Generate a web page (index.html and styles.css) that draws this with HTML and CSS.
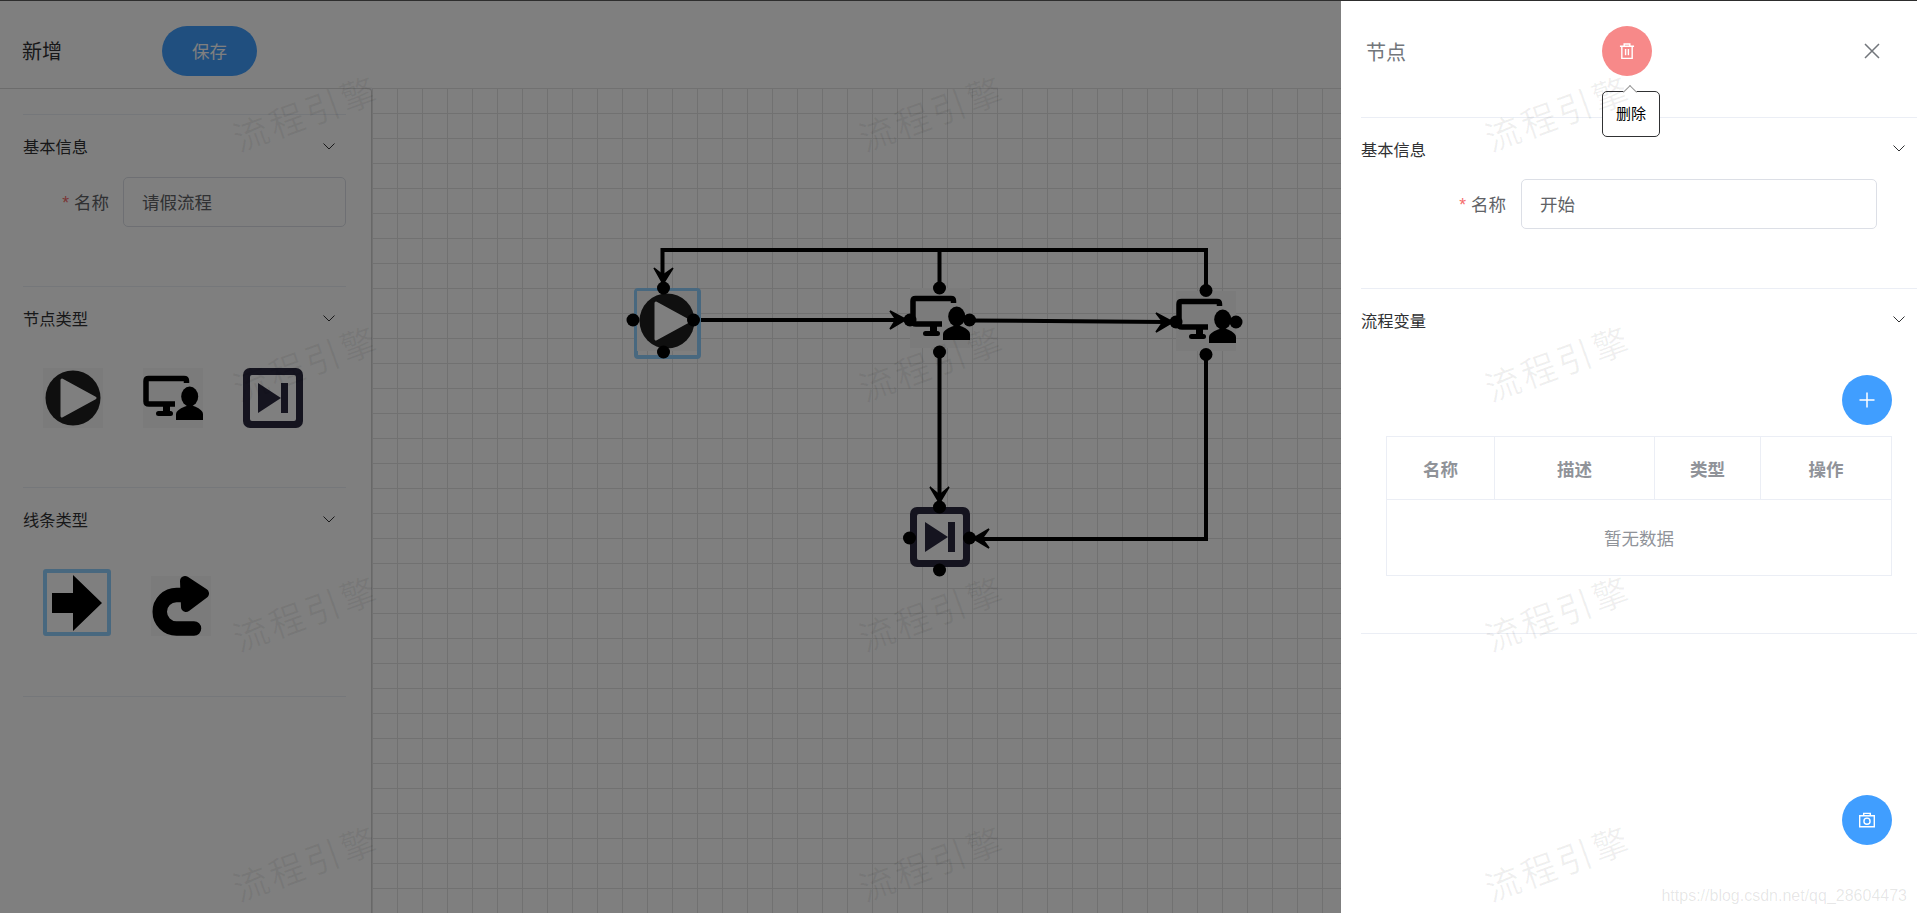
FILE: index.html
```html
<!DOCTYPE html>
<html lang="zh-CN">
<head>
    <meta charset="UTF-8">
    <title>流程引擎</title>
    <link rel="stylesheet" href="styles.css">
</head>
<body>
    <!-- icons shared by the palette and the canvas -->
    <svg class="icon-defs" aria-hidden="true">
        <symbol id="icon-start" viewBox="0 0 60 60">
            <rect width="60" height="60" fill="#f7f7f7"/>
            <circle cx="30" cy="30" r="27.5" fill="#1e1e1e"/>
            <polygon points="19,12 52,30 19,48" fill="#fff" stroke="#fff" stroke-width="3" stroke-linejoin="round"/>
        </symbol>
        <symbol id="icon-task" viewBox="0 0 60 60">
            <rect width="60" height="60" fill="#f7f7f7"/>
            <path d="M43.5 15V13Q43.5 10.5 41 10.5H5.500Q3 10.500 3 13V33.500Q3 36 6 36H32" fill="none" stroke="#000" stroke-width="5.500"/>
            <rect x="20" y="37" width="7" height="7"/>
            <rect x="13" y="43" width="17" height="5" rx="2.5"/>
            <ellipse cx="46.700" cy="28.500" rx="8.500" ry="10"/>
            <path d="M33 52V46Q33 42 42 38.500Q47 36.500 52 38.500Q60 42 60 46V52Z"/>
        </symbol>
        <symbol id="icon-end" viewBox="0 0 60 60">
            <rect width="60" height="60" rx="7" fill="#2a283e"/>
            <rect x="7" y="7" width="46" height="46" rx="2" fill="#fff"/>
            <polygon points="15,15 38,30 15,45" fill="#2a283e"/>
            <rect x="38" y="15" width="7" height="30" fill="#2a283e"/>
        </symbol>
    </svg>

    <div class="page">
        <div class="page-header">
            <span class="page-title">新增</span>
            <button class="btn-save">保存</button>
        </div>

        <div class="page-body">
            <div class="panel">
                <div class="collapse">
                    <div class="collapse-item">
                        <div class="collapse-title">
                            <span>基本信息</span>
                            <svg class="chevron" viewBox="0 0 12 7"><path d="M.5.5 6 6 11.500.5"/></svg>
                        </div>
                        <div class="form-row panel-form">
                            <label class="form-label"><i>*</i> 名称</label>
                            <input class="form-input" value="请假流程">
                        </div>
                    </div>
                    <div class="collapse-item">
                        <div class="collapse-title">
                            <span>节点类型</span>
                            <svg class="chevron" viewBox="0 0 12 7"><path d="M.5.5 6 6 11.500.5"/></svg>
                        </div>
                        <div class="palette">
                            <svg class="palette-icon"><use href="#icon-start"/></svg>
                            <svg class="palette-icon"><use href="#icon-task"/></svg>
                            <svg class="palette-icon"><use href="#icon-end"/></svg>
                        </div>
                    </div>
                    <div class="collapse-item">
                        <div class="collapse-title">
                            <span>线条类型</span>
                            <svg class="chevron" viewBox="0 0 12 7"><path d="M.5.5 6 6 11.500.5"/></svg>
                        </div>
                        <div class="palette palette-lines">
                            <div class="line-selected">
                                <svg class="line-icon" viewBox="0 0 50 57">
                                    <polygon points="0,18 21,18 21,0 50,28 21,56 21,38 0,38"/>
                                </svg>
                            </div>
                            <svg class="palette-icon" viewBox="0 0 60 60">
                                <rect width="60" height="60" fill="#f7f7f7"/>
                                <path d="M43 52.500H25.500A16.750 16.750 0 0 1 25.500 19H40" fill="none" stroke="#000" stroke-width="14.500" stroke-linecap="round"/>
                                <polygon points="34,5 53,17.500 35,31" stroke="#000" stroke-width="10" stroke-linejoin="round"/>
                            </svg>
                        </div>
                    </div>
                </div>
            </div>

            <div class="canvas">
                <svg class="diagram">
                    <g transform="translate(-372 -88)">
                        <path class="edge" d="M694 320H900"/>
                        <path class="edge" d="M969 320.500 1166 322"/>
                        <path class="edge" d="M1206 290V250H662.500V276"/>
                        <path class="edge" d="M939.500 288V250"/>
                        <path class="edge" d="M939.500 352V496"/>
                        <path class="edge" d="M1206 354V539H981"/>

                        <rect class="selected" x="636" y="290" width="63" height="67" rx="2"/>
                        <use href="#icon-start" x="637" y="291" width="60" height="60"/>
                        <use href="#icon-task" x="910" y="288" width="60" height="60"/>
                        <use href="#icon-task" x="1176" y="291" width="60" height="60"/>
                        <use href="#icon-end" x="910" y="507" width="60" height="60"/>

                        <g class="arrows">
                            <polygon points="906,319.500 890,311 896,319.500 890,329"/>
                            <polygon points="1173,322 1156,313 1163,322 1156,332"/>
                            <polygon points="663,284 654,268 663,275 673,268"/>
                            <polygon points="939.500,503 930,487 939.500,495 949,487"/>
                            <polygon points="973,538.500 989,529 982,538.500 989,548"/>
                        </g>

                        <circle cx="633" cy="320" r="6.500"/>
                        <circle cx="693.500" cy="320" r="6.500"/>
                        <circle cx="663.500" cy="288" r="6.500"/>
                        <circle cx="663.500" cy="352" r="6.500"/>
                        <circle cx="910" cy="320" r="6.500"/>
                        <circle cx="969.500" cy="320" r="6.500"/>
                        <circle cx="939.500" cy="288" r="6.500"/>
                        <circle cx="939.500" cy="352" r="6.500"/>
                        <circle cx="1176" cy="322" r="6.500"/>
                        <circle cx="1236" cy="322" r="6.500"/>
                        <circle cx="1206" cy="290.500" r="6.500"/>
                        <circle cx="1206" cy="354.500" r="6.500"/>
                        <circle cx="909.500" cy="538" r="6.500"/>
                        <circle cx="969.500" cy="538" r="6.500"/>
                        <circle cx="939.500" cy="507" r="6.500"/>
                        <circle cx="939.500" cy="570" r="6.500"/>
                    </g>
                </svg>
            </div>
        </div>
    </div>

    <div class="overlay"></div>

    <div class="drawer">
        <div class="drawer-header">
            <span class="drawer-title">节点</span>
            <div class="delete-wrap">
                <button class="btn-round btn-danger">
                    <svg class="btn-icon" viewBox="0 0 16 17">
                        <path d="M.5 3.500H15.500M5 3.500V1H11V3.500M2.500 3.500V16.500H13.500V3.500M6.500 6.500V13M9.500 6.500V13"/>
                    </svg>
                </button>
                <div class="tooltip">删除</div>
            </div>
            <svg class="close-icon" viewBox="0 0 16 16"><path d="M1 1 15 15M15 1 1 15"/></svg>
        </div>

        <div class="collapse drawer-collapse">
            <div class="collapse-item">
                <div class="collapse-title">
                    <span>基本信息</span>
                    <svg class="chevron" viewBox="0 0 12 7"><path d="M.5.5 6 6 11.500.5"/></svg>
                </div>
                <div class="form-row drawer-form">
                    <label class="form-label"><i>*</i> 名称</label>
                    <input class="form-input" value="开始">
                </div>
            </div>
            <div class="collapse-item">
                <div class="collapse-title">
                    <span>流程变量</span>
                    <svg class="chevron" viewBox="0 0 12 7"><path d="M.5.5 6 6 11.500.5"/></svg>
                </div>
                <div class="variables">
                    <button class="btn-round btn-primary">
                        <svg class="btn-icon" viewBox="0 0 16 16"><path d="M8 .5V15.500M.5 8H15.500"/></svg>
                    </button>
                    <table class="var-table">
                        <colgroup>
                            <col class="col-name">
                            <col class="col-desc">
                            <col class="col-type">
                            <col class="col-action">
                        </colgroup>
                        <thead>
                            <tr>
                                <th>名称</th>
                                <th>描述</th>
                                <th>类型</th>
                                <th>操作</th>
                            </tr>
                        </thead>
                        <tbody>
                            <tr>
                                <td colspan="4">暂无数据</td>
                            </tr>
                        </tbody>
                    </table>
                </div>
            </div>
        </div>

        <button class="btn-round btn-primary btn-snapshot">
            <svg class="btn-icon" viewBox="0 0 17 16">
                <path d="M.75 3.500H16.250V15.250H.75ZM5 3.500V1H12V3.500"/>
                <circle cx="8.500" cy="9.250" r="3.250"/>
            </svg>
        </button>
    </div>

    <div class="watermark">
        <div class="watermark-grid">
            <span>流程引擎</span><span>流程引擎</span><span>流程引擎</span>
            <span>流程引擎</span><span>流程引擎</span><span>流程引擎</span>
            <span>流程引擎</span><span>流程引擎</span><span>流程引擎</span>
            <span>流程引擎</span><span>流程引擎</span><span>流程引擎</span>
        </div>
    </div>
    <div class="blog-mark">https://blog.csdn.net/qq_28604473</div>
</body>
</html>
```

FILE: styles.css
```css
/* Page */
* {
    box-sizing: border-box;
}

html, body {
    height: 100%;
}

body {
    margin: 0;
    position: relative;
    overflow: hidden;
    background-color: #fff;
    color: #303133;
    font-family: "Liberation Sans", "Noto Sans CJK SC", sans-serif;
}

button {
    font-family: inherit;
    border: 0;
    padding: 0;
    cursor: pointer;
}

.icon-defs {
    position: absolute;
    width: 0;
    height: 0;
}

.page {
    display: flex;
    flex-direction: column;
    height: 100%;
    border-top: 1px solid #5a5a5a;
}

.page-header {
    display: flex;
    height: 87px;
    padding: 25px 0 0 22px;
}

.page-title {
    width: 140px;
    font-size: 20px;
    line-height: 52px;
}

.btn-save {
    width: 95px;
    height: 50px;
    padding-bottom: 2px;
    border-radius: 25px;
    background-color: #409eff;
    color: #fff;
    font-size: 17.5px;
}

.page-body {
    display: flex;
    flex: 1;
    min-height: 0;
}

/* Left panel */
.panel {
    width: 372px;
    padding: 25px 25px 0 23px;
    border-top: 1px solid #d8d8d8;
    border-right: 1px solid #d0d0d0;
    border-top-right-radius: 4px;
}

.collapse-item {
    border-top: 1px solid #ebeef5;
}

.collapse-item:last-child {
    border-bottom: 1px solid #ebeef5;
}

.collapse-title {
    display: flex;
    align-items: center;
    justify-content: space-between;
    height: 62px;
    padding-right: 11px;
    font-size: 16.25px;
}

.chevron {
    width: 12px;
    height: 7px;
    fill: none;
    stroke: #303133;
    stroke-width: 1;
}

.form-row {
    display: flex;
    font-size: 17.500px;
}

.panel-form {
    padding-bottom: 59px;
}

.panel-form .form-label {
    width: 100px;
    padding-right: 14px;
}

.form-label {
    flex: none;
    height: 50px;
    line-height: 52px;
    text-align: right;
    color: #606266;
}

.form-label i {
    font-style: normal;
    color: #f56c6c;
}

.form-input {
    flex: 1;
    min-width: 0;
    height: 50px;
    padding: 0 18px 2px;
    border: 1px solid #dcdfe6;
    border-radius: 5px;
    outline: none;
    color: #606266;
    font-family: inherit;
    font-size: 17.500px;
}

.palette {
    display: flex;
    align-items: flex-end;
    gap: 40px;
    padding: 19px 0 59px 20px;
}

.palette-icon {
    display: block;
    width: 60px;
    height: 60px;
}

.palette-lines {
    padding-bottom: 60px;
}

.line-selected {
    width: 68px;
    height: 67px;
    padding: 2px 0 0 5px;
    border: 4px solid #90d0ff;
    border-radius: 3px;
}

.line-icon {
    display: block;
    width: 50px;
    height: 57px;
}

/* Canvas */
.canvas {
    flex: 1;
    position: relative;
    background-color: #fff;
    background-image:
        linear-gradient(#e2e2e2 1px, transparent 1px),
        linear-gradient(90deg, #e2e2e2 1px, transparent 1px);
    background-size: 25px 25px;
}

.diagram {
    position: absolute;
    top: 0;
    left: 0;
    width: 100%;
    height: 100%;
}

.edge {
    fill: none;
    stroke: #000;
    stroke-width: 4;
}

.arrows {
    stroke: #000;
    stroke-width: 1.5;
}

.selected {
    fill: none;
    stroke: #90d0ff;
    stroke-width: 4;
}

/* Dim layer behind the drawer */
.overlay {
    position: absolute;
    top: 0;
    left: 0;
    right: 0;
    bottom: 0;
    background-color: rgba(0, 0, 0, 0.5);
}

/* Right drawer */
.drawer {
    position: absolute;
    top: 0;
    right: 0;
    bottom: 0;
    width: 576px;
    display: flex;
    flex-direction: column;
    background-color: #fff;
    border-top: 1px solid #2d2d2d;
}

.drawer-header {
    display: flex;
    align-items: center;
    flex: none;
    height: 100px;
    margin-bottom: 16px;
    padding: 0 37px 0 25px;
}

.drawer-title {
    width: 236px;
    font-size: 20px;
    color: #72767b;
}

.delete-wrap {
    position: relative;
}

.btn-round {
    display: flex;
    align-items: center;
    justify-content: center;
    width: 50px;
    height: 50px;
    border-radius: 50%;
}

.btn-primary {
    background-color: #409eff;
}

.btn-danger {
    background-color: #f78989;
}

.btn-icon {
    width: 16px;
    height: 16px;
    fill: none;
    stroke: #fff;
    stroke-width: 1.500;
}

.close-icon {
    width: 16px;
    height: 16px;
    margin-left: auto;
    fill: none;
    stroke: #72767b;
    stroke-width: 1.500;
}

.tooltip {
    position: absolute;
    top: 65px;
    left: 0;
    width: 58px;
    height: 46px;
    border: 1px solid #303133;
    border-radius: 5px;
    background-color: #fff;
    color: #000;
    font-size: 15px;
    line-height: 44px;
    text-align: center;
}

.tooltip::before {
    content: "";
    position: absolute;
    top: -5px;
    left: 22px;
    width: 9px;
    height: 9px;
    border-top: 1px solid #999;
    border-left: 1px solid #999;
    background-color: #fff;
    transform: rotate(45deg);
}

.drawer-collapse {
    margin-left: 20px;
}

.drawer-collapse .collapse-title {
    height: 61px;
    padding-right: 12px;
}

.drawer-form {
    padding: 0 40px 59px 0;
}

.drawer-form .form-label {
    width: 160px;
    padding-right: 15px;
}

.variables {
    display: flex;
    flex-direction: column;
    align-items: flex-end;
    padding: 25px 25px 57px;
}

.var-table {
    width: 505px;
    margin-top: 11px;
    border-collapse: collapse;
    table-layout: fixed;
    font-size: 17.500px;
    color: #909399;
}

.var-table th, .var-table td {
    border: 1px solid #ebeef5;
    padding: 0;
    text-align: center;
}

.var-table th {
    height: 63px;
    font-weight: bold;
}

.var-table td {
    height: 76px;
}

.col-name {
    width: 108px;
}

.col-desc {
    width: 160px;
}

.col-type {
    width: 106px;
}

.col-action {
    width: 131px;
}

.btn-snapshot {
    flex: none;
    align-self: flex-end;
    margin: auto 25px 68px 0;
}

/* Watermarks on top of everything */
.watermark {
    position: absolute;
    top: 0;
    left: 0;
    right: 0;
    bottom: 0;
    overflow: hidden;
    pointer-events: none;
}

.watermark-grid {
    display: grid;
    grid-template-columns: repeat(3, 626px);
    grid-auto-rows: 250px;
    margin: -14px 0 0 -8px;
}

.watermark-grid span {
    display: flex;
    align-items: center;
    justify-content: center;
    font-size: 35px;
    letter-spacing: 3px;
    color: rgba(0, 0, 0, 0.06);
    transform: rotate(-20deg);
}

.blog-mark {
    position: absolute;
    right: 10px;
    bottom: 8px;
    font-size: 16px;
    color: rgba(0, 0, 0, 0.1);
    pointer-events: none;
}
```
